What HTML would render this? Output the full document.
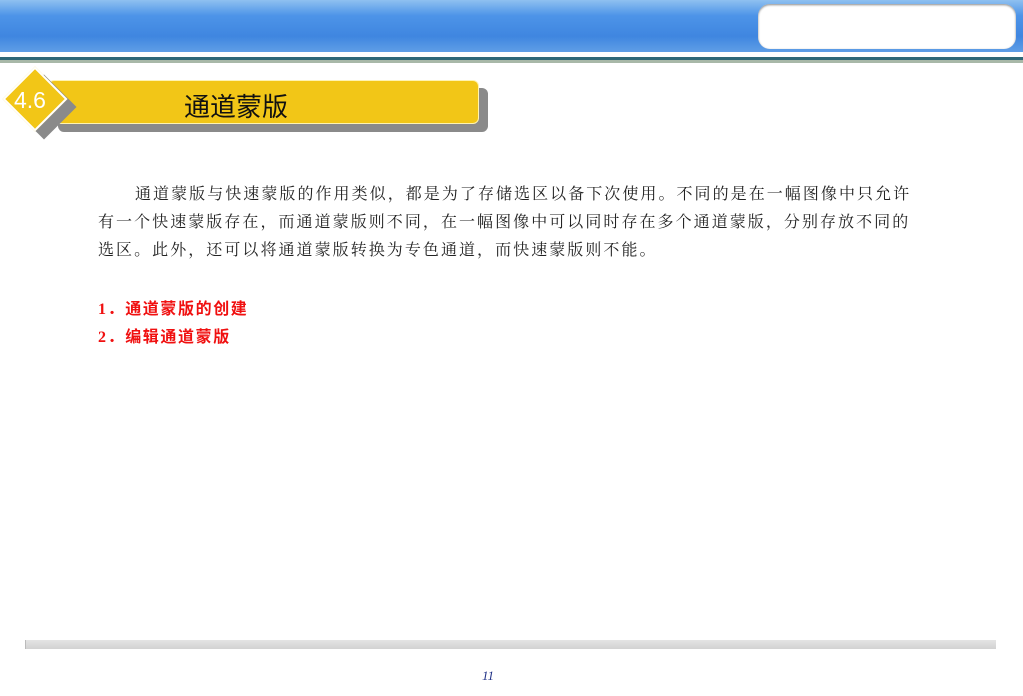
<!DOCTYPE html>
<html><head><meta charset="utf-8"><style>
body{margin:0;width:1023px;height:696px;background:#fff;position:relative;overflow:hidden;font-family:"Liberation Sans","Noto Sans CJK SC",sans-serif}
.hdr{position:absolute;left:0;top:0;width:1023px;height:52px;background:linear-gradient(180deg,#8fc0f0 0%,#4d94e8 30%,#3f86e0 70%,#5f9ee6 100%)}
.hl{position:absolute;left:0;top:52px;width:1023px;height:5px;background:#fff}
.tl{position:absolute;left:0;top:57px;width:1023px;height:3px;background:#2f6878}
.gl{position:absolute;left:0;top:60px;width:1023px;height:3px;background:#a8b8a8}
.box{position:absolute;left:758px;top:4px;width:258px;height:45px;background:#fff;border-radius:12px;box-shadow:inset 0 1px 2px #888}
.sh{position:absolute;left:58px;top:88px;width:430px;height:44px;background:#8a8a8a;border-radius:6px}
.bar{position:absolute;left:48px;top:80px;width:431px;height:44px;background:#f2c617;border-radius:6px;border:1px solid #fff3b0;box-sizing:border-box}
.t{position:absolute;left:184px;top:87px;font-size:26px;color:#111}
.dsh{position:absolute;left:21px;top:84px;width:46px;height:46px;background:#8a8a8a;transform:rotate(45deg)}
.dia{position:absolute;left:12px;top:76px;width:46px;height:46px;background:#f2c617;transform:rotate(45deg);border:2px solid #fff;box-sizing:border-box}
.num{position:absolute;left:14px;top:87px;font-size:23px;color:#fff}
.p{position:absolute;left:98px;font-family:"Liberation Serif","Noto Serif CJK SC",serif;font-size:16px;letter-spacing:2.05px;white-space:nowrap;color:#222}
.r{color:#f01010;font-weight:bold;font-family:"Liberation Serif","Noto Sans CJK SC",sans-serif}
.foot{position:absolute;left:25px;top:640px;width:970px;height:9px;background:linear-gradient(#e4e4e4,#d2d2d2);border-left:1px solid #bbb}
.pg{position:absolute;left:482px;top:668px;font-family:"Liberation Serif",serif;font-style:italic;font-size:13px;color:#223388}
</style></head><body>
<div class="hdr"></div><div class="hl"></div><div class="tl"></div><div class="gl"></div>
<div class="box"></div>
<div class="sh"></div><div class="bar"></div>
<div class="t">通道蒙版</div>
<div class="dsh"></div><div class="dia"></div><div class="num">4.6</div>
<div class="p" style="top:181px;left:135px">通道蒙版与快速蒙版的作用类似，都是为了存储选区以备下次使用。不同的是在一幅图像中只允许</div>
<div class="p" style="top:209px">有一个快速蒙版存在，而通道蒙版则不同，在一幅图像中可以同时存在多个通道蒙版，分别存放不同的</div>
<div class="p" style="top:237px">选区。此外，还可以将通道蒙版转换为专色通道，而快速蒙版则不能。</div>
<div class="p r" style="top:295px;letter-spacing:1.6px">1．通道蒙版的创建</div>
<div class="p r" style="top:323px;letter-spacing:1.6px">2．编辑通道蒙版</div>
<div class="foot"></div>
<div class="pg">11</div>
</body></html>
